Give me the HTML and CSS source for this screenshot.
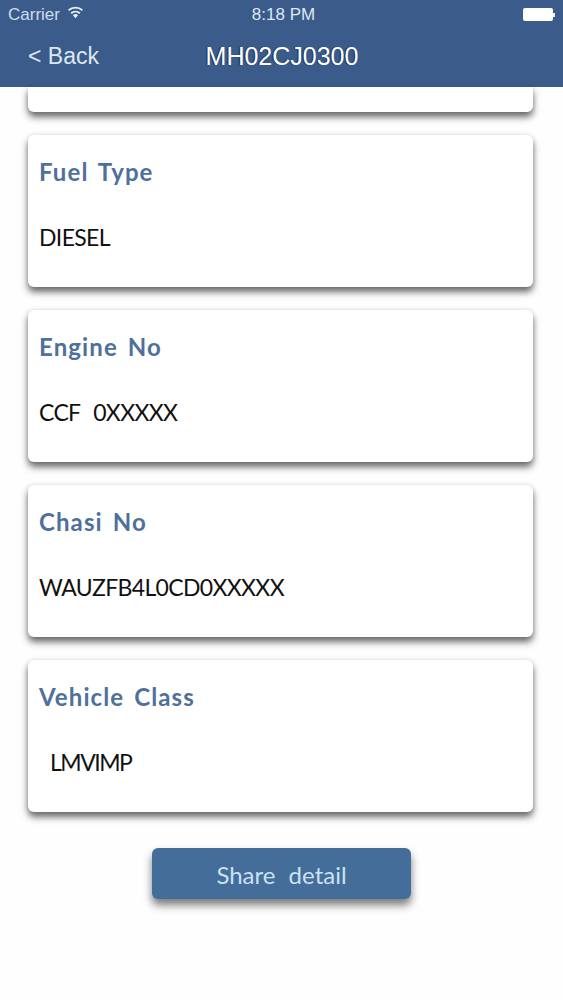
FILE: index.html
```html
<!DOCTYPE html>
<html lang="en">
<head>
<meta charset="utf-8">
<title>MH02CJ0300</title>
<link rel="stylesheet" href="styles.css">
</head>
<body>
<header class="top">
  <div class="status">
    <div class="status-left">
      <span>Carrier</span>
      <svg class="wifi" width="17" height="13" viewBox="0 0 16 12"><path d="M8 11.5 5.6 8.6a3.6 3.6 0 0 1 4.8 0Z" fill="#e8f0f8"/><path d="M3.9 6.7a6.2 6.2 0 0 1 8.2 0M1.5 3.9a10 10 0 0 1 13 0" fill="none" stroke="#e8f0f8" stroke-width="1.7"/></svg>
    </div>
    <span class="clock">8:18 PM</span>
    <div class="battery"><span class="battery-body"></span><span class="battery-tip"></span></div>
  </div>
  <nav class="nav">
    <span class="back">&lt; Back</span>
    <span class="title">MH02CJ0300</span>
  </nav>
</header>
<main class="content">
  <div class="card card-cut"></div>
  <section class="card"><h2 class="label">Fuel Type</h2><p class="value">DIESEL</p></section>
  <section class="card"><h2 class="label">Engine No</h2><p class="value">CCF 0XXXXX</p></section>
  <section class="card"><h2 class="label">Chasi No</h2><p class="value">WAUZFB4L0CD0XXXXX</p></section>
  <section class="card"><h2 class="label">Vehicle Class</h2><p class="value value-indent">LMVIMP</p></section>
  <button class="share">Share detail</button>
</main>
</body>
</html>
```
FILE: styles.css
```css
* { box-sizing: border-box; }
html, body { margin: 0; padding: 0; }
body { width: 563px; height: 1000px; overflow: hidden; background: #fefefe; font-family: "Lato", sans-serif; }
.top { height: 87px; background: #3b5c8b; color: #e8f0f8; font-family: "Liberation Sans", sans-serif; display: flex; flex-direction: column; }
.status { height: 29px; padding: 0 8px; display: grid; grid-template-columns: 1fr auto 1fr; align-items: center; font-size: 17px; }
.status-left { display: flex; align-items: center; gap: 7px; color: #cfdceb; }
.wifi { margin-top: -4px; }
.clock { color: #dfe8f2; margin-left: 4px; }
.battery { justify-self: end; display: flex; align-items: center; }
.battery-body { width: 30px; height: 13px; background: #fff; border-radius: 2px; }
.battery-tip { width: 2px; height: 4px; background: #e8f0f8; }
.nav { position: relative; flex: 1; display: flex; align-items: center; justify-content: center; padding-bottom: 3px; }
.back { position: absolute; left: 28px; font-size: 23px; color: #dce7f2; }
.title { font-size: 25px; color: #fff; margin-left: 1px; text-shadow: -1px 0 1px rgba(0, 0, 0, .55); }
.content { display: flex; flex-direction: column; align-items: center; gap: 23px; padding-right: 2px; }
.card { width: 505px; height: 152px; padding: 22px 11px 0; background: #fff; border-radius: 6px; box-shadow: 0 5px 7px rgba(50, 50, 50, .72), 0 0 5px rgba(0, 0, 0, .1); }
.card-cut { height: 25px; padding: 0; border-radius: 0 0 6px 6px; }
.label { margin: 0; font-size: 24px; line-height: 30px; font-weight: 700; color: #4e709b; word-spacing: 3px; letter-spacing: 1.1px; }
.value { margin: 35px 0 0; font-size: 23px; line-height: 30px; color: #111; word-spacing: 8px; letter-spacing: -.65px; }
.value-indent { padding-left: 11px; letter-spacing: -1.5px; }
.share { width: 259px; height: 51px; margin: 13px 0 0 2px; padding: 1px 0 0; border: 0; border-radius: 6px; background: #456d9a; color: #c9e2f3; font-family: "Lato", sans-serif; font-size: 24px; word-spacing: 7px; box-shadow: 0 6px 8px rgba(50, 50, 50, .65); }
```
